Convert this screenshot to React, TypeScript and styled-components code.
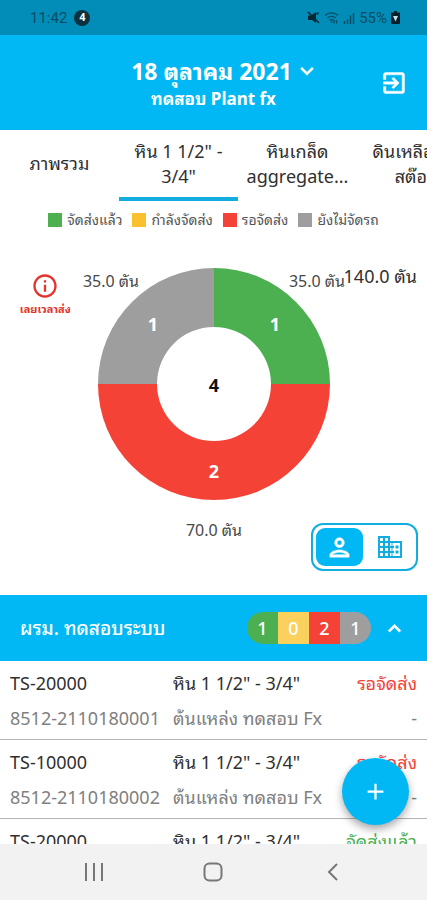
import React, { useState } from "react";
import styled, { createGlobalStyle } from "styled-components";
import {
  MdAdd,
  MdExitToApp,
  MdExpandLess,
  MdExpandMore,
  MdInfoOutline,
  MdOutlinePerson,
} from "react-icons/md";

const colors = {
  brand: "#02b8f4",
  line: "#12addf",
  green: "#4caf50",
  amber: "#fbc02d",
  red: "#f44336",
  grey: "#9e9e9e",
};

const GlobalStyle = createGlobalStyle`
  *, *::before, *::after { box-sizing: border-box; }
  body {
    margin: 0;
    background: #fff;
    color: #303030;
    font-family: "Noto Sans", "Noto Sans Thai Looped", "Noto Looped Thai", Loma, Garuda, "Noto Sans Thai", sans-serif;
  }
  button { font: inherit; color: inherit; background: none; border: 0; padding: 0; cursor: pointer; }
  svg { display: block; flex: none; }
  path[fill="none"] { stroke: none; }
`;

const Screen = styled.div`
  position: relative;
  display: flex;
  flex-direction: column;
  height: 100vh;
  overflow: hidden;
`;

const StatusBar = styled.div`
  flex: none;
  display: flex;
  align-items: center;
  justify-content: space-between;
  height: 35px;
  padding: 0 27px 0 30px;
  background: #028cb8;
  color: #0b4c63;
  font: 15px/20px Roboto, sans-serif;
`;

const StatusGroup = styled.div<{ $gap: number }>`
  display: flex;
  align-items: center;
  gap: ${(p) => p.$gap}px;
`;

const CountDot = styled.span`
  width: 16px;
  height: 16px;
  border-radius: 50%;
  background: #0c3240;
  color: #fff;
  font-size: 11px;
  font-weight: 700;
  line-height: 16px;
  text-align: center;
`;

const Header = styled.header`
  flex: none;
  display: grid;
  grid-template-columns: 44px 1fr 44px;
  align-items: center;
  height: 95px;
  padding: 0 11px;
  background: ${colors.brand};
  color: #fff;
`;

const HeaderCenter = styled.div`
  display: flex;
  flex-direction: column;
  align-items: center;
  padding-top: 2px;
`;

const DateButton = styled.button`
  display: flex;
  align-items: center;
  gap: 2px;
  padding-left: 24px;
  && { font-size: 23px; font-weight: 700; line-height: 30px; color: #fff; }
`;

const PlantName = styled.div`
  font-size: 17px;
  font-weight: 700;
  line-height: 26px;
`;

const ExitButton = styled.button`
  justify-self: center;
`;

const Tabs = styled.nav`
  flex: none;
  display: flex;
  height: 71px;
  overflow: hidden;
`;

const Tab = styled.button<{ $active: boolean }>`
  flex: 0 0 119px;
  display: flex;
  align-items: center;
  justify-content: center;
  border-bottom: 4px solid ${(p) => (p.$active ? colors.line : "transparent")};
  && { font-size: 18px; line-height: 25px; white-space: pre-line; }
`;

const Legend = styled.ul`
  flex: none;
  display: flex;
  justify-content: center;
  gap: 10px;
  margin: 0;
  padding: 9px 0 0;
  list-style: none;
`;

const LegendItem = styled.li<{ $color: string }>`
  display: flex;
  align-items: center;
  gap: 5px;
  font-size: 14px;
  line-height: 20px;
  white-space: nowrap;
  color: #555;
  &::before {
    content: "";
    width: 14px;
    height: 14px;
    background: ${(p) => p.$color};
  }
`;

const ChartPanel = styled.section`
  position: relative;
  flex: none;
  display: grid;
  grid-template-columns: minmax(0, 1fr) 262px minmax(0, 1fr);
  padding: 30px 0 50px;
`;

const Overdue = styled.button`
  justify-self: center;
  align-self: start;
  display: flex;
  flex-direction: column;
  align-items: center;
  margin-top: 12px;
  && { padding-left: 8px; font-size: 11px; font-weight: 700; line-height: 18px; white-space: nowrap; color: #e2332c; }
`;

const Total = styled.div`
  justify-self: end;
  padding-right: 10px;
  margin-top: 4px;
  font-size: 18px;
  line-height: 24px;
  white-space: nowrap;
`;

const Donut = styled.svg`
  overflow: visible;
  text { text-anchor: middle; }
`;

const SliceLabel = styled.text`
  font-size: 16px;
  fill: #484848;
`;

const SliceCount = styled.text<{ $fill?: string }>`
  font-size: 18px;
  font-weight: 700;
  fill: ${(p) => p.$fill ?? "#fff"};
`;

const Toggle = styled.div`
  position: absolute;
  right: 9px;
  bottom: 24px;
  display: flex;
  gap: 3px;
  padding: 3px;
  border: 2px solid ${colors.line};
  border-radius: 12px;
  background: #fff;
`;

const ToggleButton = styled.button<{ $active: boolean }>`
  display: flex;
  align-items: center;
  justify-content: center;
  width: 47px;
  height: 38px;
  border-radius: 9px;
  && {
    background: ${(p) => (p.$active ? colors.brand : "transparent")};
    color: ${(p) => (p.$active ? "#fff" : colors.line)};
  }
`;

const GroupHeader = styled.div`
  flex: none;
  display: flex;
  align-items: center;
  height: 66px;
  padding: 0 20px;
  background: ${colors.brand};
  color: #fff;
  font-size: 18px;
  line-height: 28px;
`;

const GroupTitle = styled.h2`
  flex: 1;
  margin: 0;
  font-size: 19px;
  font-weight: 500;
`;

const Pills = styled.div`
  display: flex;
  border-radius: 16px;
  overflow: hidden;
  margin-right: 11px;
`;

const Pill = styled.span<{ $color: string }>`
  width: 31px;
  line-height: 32px;
  text-align: center;
  font-weight: 500;
  background: ${(p) => p.$color};
`;

const List = styled.ul`
  flex: 1;
  min-height: 0;
  overflow: hidden;
  margin: 0;
  padding: 0;
  list-style: none;
`;

const Row = styled.li`
  display: grid;
  grid-template-columns: 163px 1fr auto;
  row-gap: 8px;
  padding: 9px 10px 7px;
  border-bottom: 1px solid #b4b4b4;
  font-size: 18px;
  line-height: 27px;
  white-space: nowrap;
`;

const Cell = styled.span<{ $tone?: string; $end?: boolean }>`
  color: ${(p) => p.$tone ?? "#303030"};
  text-align: ${(p) => (p.$end ? "right" : "left")};
`;

const AddButton = styled.button`
  position: absolute;
  right: 18px;
  bottom: 75px;
  display: flex;
  align-items: center;
  justify-content: center;
  width: 67px;
  height: 67px;
  border-radius: 50%;
  box-shadow: 0 4px 8px rgba(0, 0, 0, 0.35);
  && { background: ${colors.brand}; color: #fff; }
`;

const SystemNav = styled.nav`
  flex: none;
  display: flex;
  align-items: center;
  justify-content: space-around;
  height: 56px;
  padding: 0 34px;
  background: #f2f2f2;
  color: #777;
`;

const MuteIcon = () => (
  <svg width="13" height="13" viewBox="0 0 13 13" fill="none" stroke="#062936" strokeWidth="1.6">
    <path d="M1 4.500h3l5-3.500v11L5 9H1z" fill="#062936" stroke="none" />
    <path d="M1 1l11 11M9.500 3.500l2-2" />
  </svg>
);

const WifiIcon = () => (
  <svg width="15" height="13" viewBox="0 0 15 13" fill="none" stroke="#0b4c63" strokeWidth="1.3">
    <path d="M1 4.5c3.600-3.400 9.400-3.400 13 0M3.300 7c2.300-2.200 6-2.200 8.400 0M5.500 9.300c1.200-1 2.800-1 4 0" />
    <path d="M7.500 10v2M10 9v3.500M12.500 9v3.500" />
  </svg>
);

const SignalIcon = () => (
  <svg width="12" height="12" viewBox="0 0 12 12" stroke="#0b4c63" strokeWidth="1.5">
    <path d="M1.500 12V9M4.500 12V7M7.500 12V3.500M10.500 12V1" />
  </svg>
);

const BatteryIcon = () => (
  <svg width="9" height="13" viewBox="0 0 9 13">
    <path d="M3 0h3v1.500h2a1 1 0 0 1 1 1V12a1 1 0 0 1-1 1H1a1 1 0 0 1-1-1V2.500a1 1 0 0 1 1-1h2z" fill="#08222c" />
    <path d="M2 5h5L4.500 10.500z" fill="#c9e2ea" />
  </svg>
);

const OfficeIcon = () => (
  <svg width="26" height="24" viewBox="0 0 26 24" fill="none" stroke="currentColor" strokeWidth="2">
    <path d="M2 2h10v20H2zM12 7h12v15H12" />
    <path d="M2 7h10M2 12h15M2 17h15M7 2v20" strokeWidth="2" />
    <path d="M15 7v15" strokeWidth="1" />
    <path d="M18.500 12h3M18.500 17h3" strokeWidth="3" />
  </svg>
);

const tabs = ["ภาพรวม", 'หิน 1 1/2" -\n3/4"', "หินเกล็ด\naggregate...", "ดินเหลืองใน\nสต๊อก"];

const legend = [
  { label: "จัดส่งแล้ว", color: colors.green },
  { label: "กำลังจัดส่ง", color: colors.amber },
  { label: "รอจัดส่ง", color: colors.red },
  { label: "ยังไม่จัดรถ", color: colors.grey },
];

const pills = [
  { value: 1, color: colors.green },
  { value: 0, color: "#fad15c" },
  { value: 2, color: colors.red },
  { value: 1, color: colors.grey },
];

const orders = [
  { code: "TS-20000", id: "8512-2110180001", status: "รอจัดส่ง", tone: colors.red },
  { code: "TS-10000", id: "8512-2110180002", status: "รอจัดส่ง", tone: colors.red },
  { code: "TS-20000", id: "8512-2110180003", status: "จัดส่งแล้ว", tone: colors.green },
];

export default function App() {
  const [tab, setTab] = useState(1);
  const [view, setView] = useState<"person" | "company">("person");

  return (
    <Screen>
      <GlobalStyle />
      <StatusBar>
        <StatusGroup $gap={7}>
          <span>11:42</span>
          <CountDot>4</CountDot>
        </StatusGroup>
        <StatusGroup $gap={4}>
          <MuteIcon />
          <WifiIcon />
          <SignalIcon />
          <span>55%</span>
          <BatteryIcon />
        </StatusGroup>
      </StatusBar>

      <Header>
        <span />
        <HeaderCenter>
          <DateButton>
            18 ตุลาคม 2021
            <MdExpandMore size={26} strokeWidth={0.5} />
          </DateButton>
          <PlantName>ทดสอบ Plant fx</PlantName>
        </HeaderCenter>
        <ExitButton aria-label="Exit">
          <MdExitToApp size={28} strokeWidth={0.4} />
        </ExitButton>
      </Header>

      <Tabs>
        {tabs.map((label, i) => (
          <Tab key={label} $active={tab === i} onClick={() => setTab(i)}>
            {label}
          </Tab>
        ))}
      </Tabs>

      <Legend>
        {legend.map((l) => (
          <LegendItem key={l.label} $color={l.color}>
            {l.label}
          </LegendItem>
        ))}
      </Legend>

      <ChartPanel>
        <Overdue>
          <MdInfoOutline size={28} />
          เลยเวลาส่ง
        </Overdue>
        <Donut width="262" height="285" viewBox="0 0 262 285">
          <path d="M131 8A116 116 0 0 1 247 124H188A57 57 0 0 0 131 67Z" fill={colors.green} />
          <path d="M247 124A116 116 0 0 1 15 124H74A57 57 0 0 0 188 124Z" fill={colors.red} />
          <path d="M15 124A116 116 0 0 1 131 8V67A57 57 0 0 0 74 124Z" fill={colors.grey} />
          <SliceLabel x="28" y="27">35.0 ตัน</SliceLabel>
          <SliceLabel x="234" y="27">35.0 ตัน</SliceLabel>
          <SliceLabel x="131" y="276">70.0 ตัน</SliceLabel>
          <SliceCount x="70" y="71">1</SliceCount>
          <SliceCount x="192" y="71">1</SliceCount>
          <SliceCount x="131" y="218">2</SliceCount>
          <SliceCount x="131" y="132" $fill="#111">4</SliceCount>
        </Donut>
        <Total>140.0 ตัน</Total>
        <Toggle>
          <ToggleButton $active={view === "person"} aria-label="By person" onClick={() => setView("person")}>
            <MdOutlinePerson size={29} strokeWidth={0.4} />
          </ToggleButton>
          <ToggleButton $active={view === "company"} aria-label="By company" onClick={() => setView("company")}>
            <OfficeIcon />
          </ToggleButton>
        </Toggle>
      </ChartPanel>

      <GroupHeader>
        <GroupTitle>ผรม. ทดสอบระบบ</GroupTitle>
        <Pills>
          {pills.map((p, i) => (
            <Pill key={i} $color={p.color}>
              {p.value}
            </Pill>
          ))}
        </Pills>
        <button aria-label="Collapse">
          <MdExpandLess size={25} color="#fff" strokeWidth={0.7} />
        </button>
      </GroupHeader>

      <List>
        {orders.map((o) => (
          <Row key={o.id}>
            <Cell>{o.code}</Cell>
            <Cell>หิน 1 1/2" - 3/4"</Cell>
            <Cell $tone={o.tone} $end>{o.status}</Cell>
            <Cell $tone="#808080">{o.id}</Cell>
            <Cell $tone="#808080">ต้นแหล่ง ทดสอบ Fx</Cell>
            <Cell $tone="#808080" $end>-</Cell>
          </Row>
        ))}
      </List>

      <AddButton aria-label="Add">
        <MdAdd size={27} />
      </AddButton>

      <SystemNav>
        <button aria-label="Recents">
          <svg width="20" height="20" viewBox="0 0 20 20" stroke="currentColor" strokeWidth="2">
            <path d="M2 1v18M10 1v18M18 1v18" />
          </svg>
        </button>
        <button aria-label="Home">
          <svg width="20" height="20" viewBox="0 0 20 20" fill="none" stroke="currentColor" strokeWidth="2">
            <rect x="1.500" y="1.500" width="17" height="17" rx="5" />
          </svg>
        </button>
        <button aria-label="Back">
          <svg width="20" height="20" viewBox="0 0 20 20" fill="none" stroke="currentColor" strokeWidth="2">
            <path d="M14 2L6 10l8 8" />
          </svg>
        </button>
      </SystemNav>
    </Screen>
  );
}
